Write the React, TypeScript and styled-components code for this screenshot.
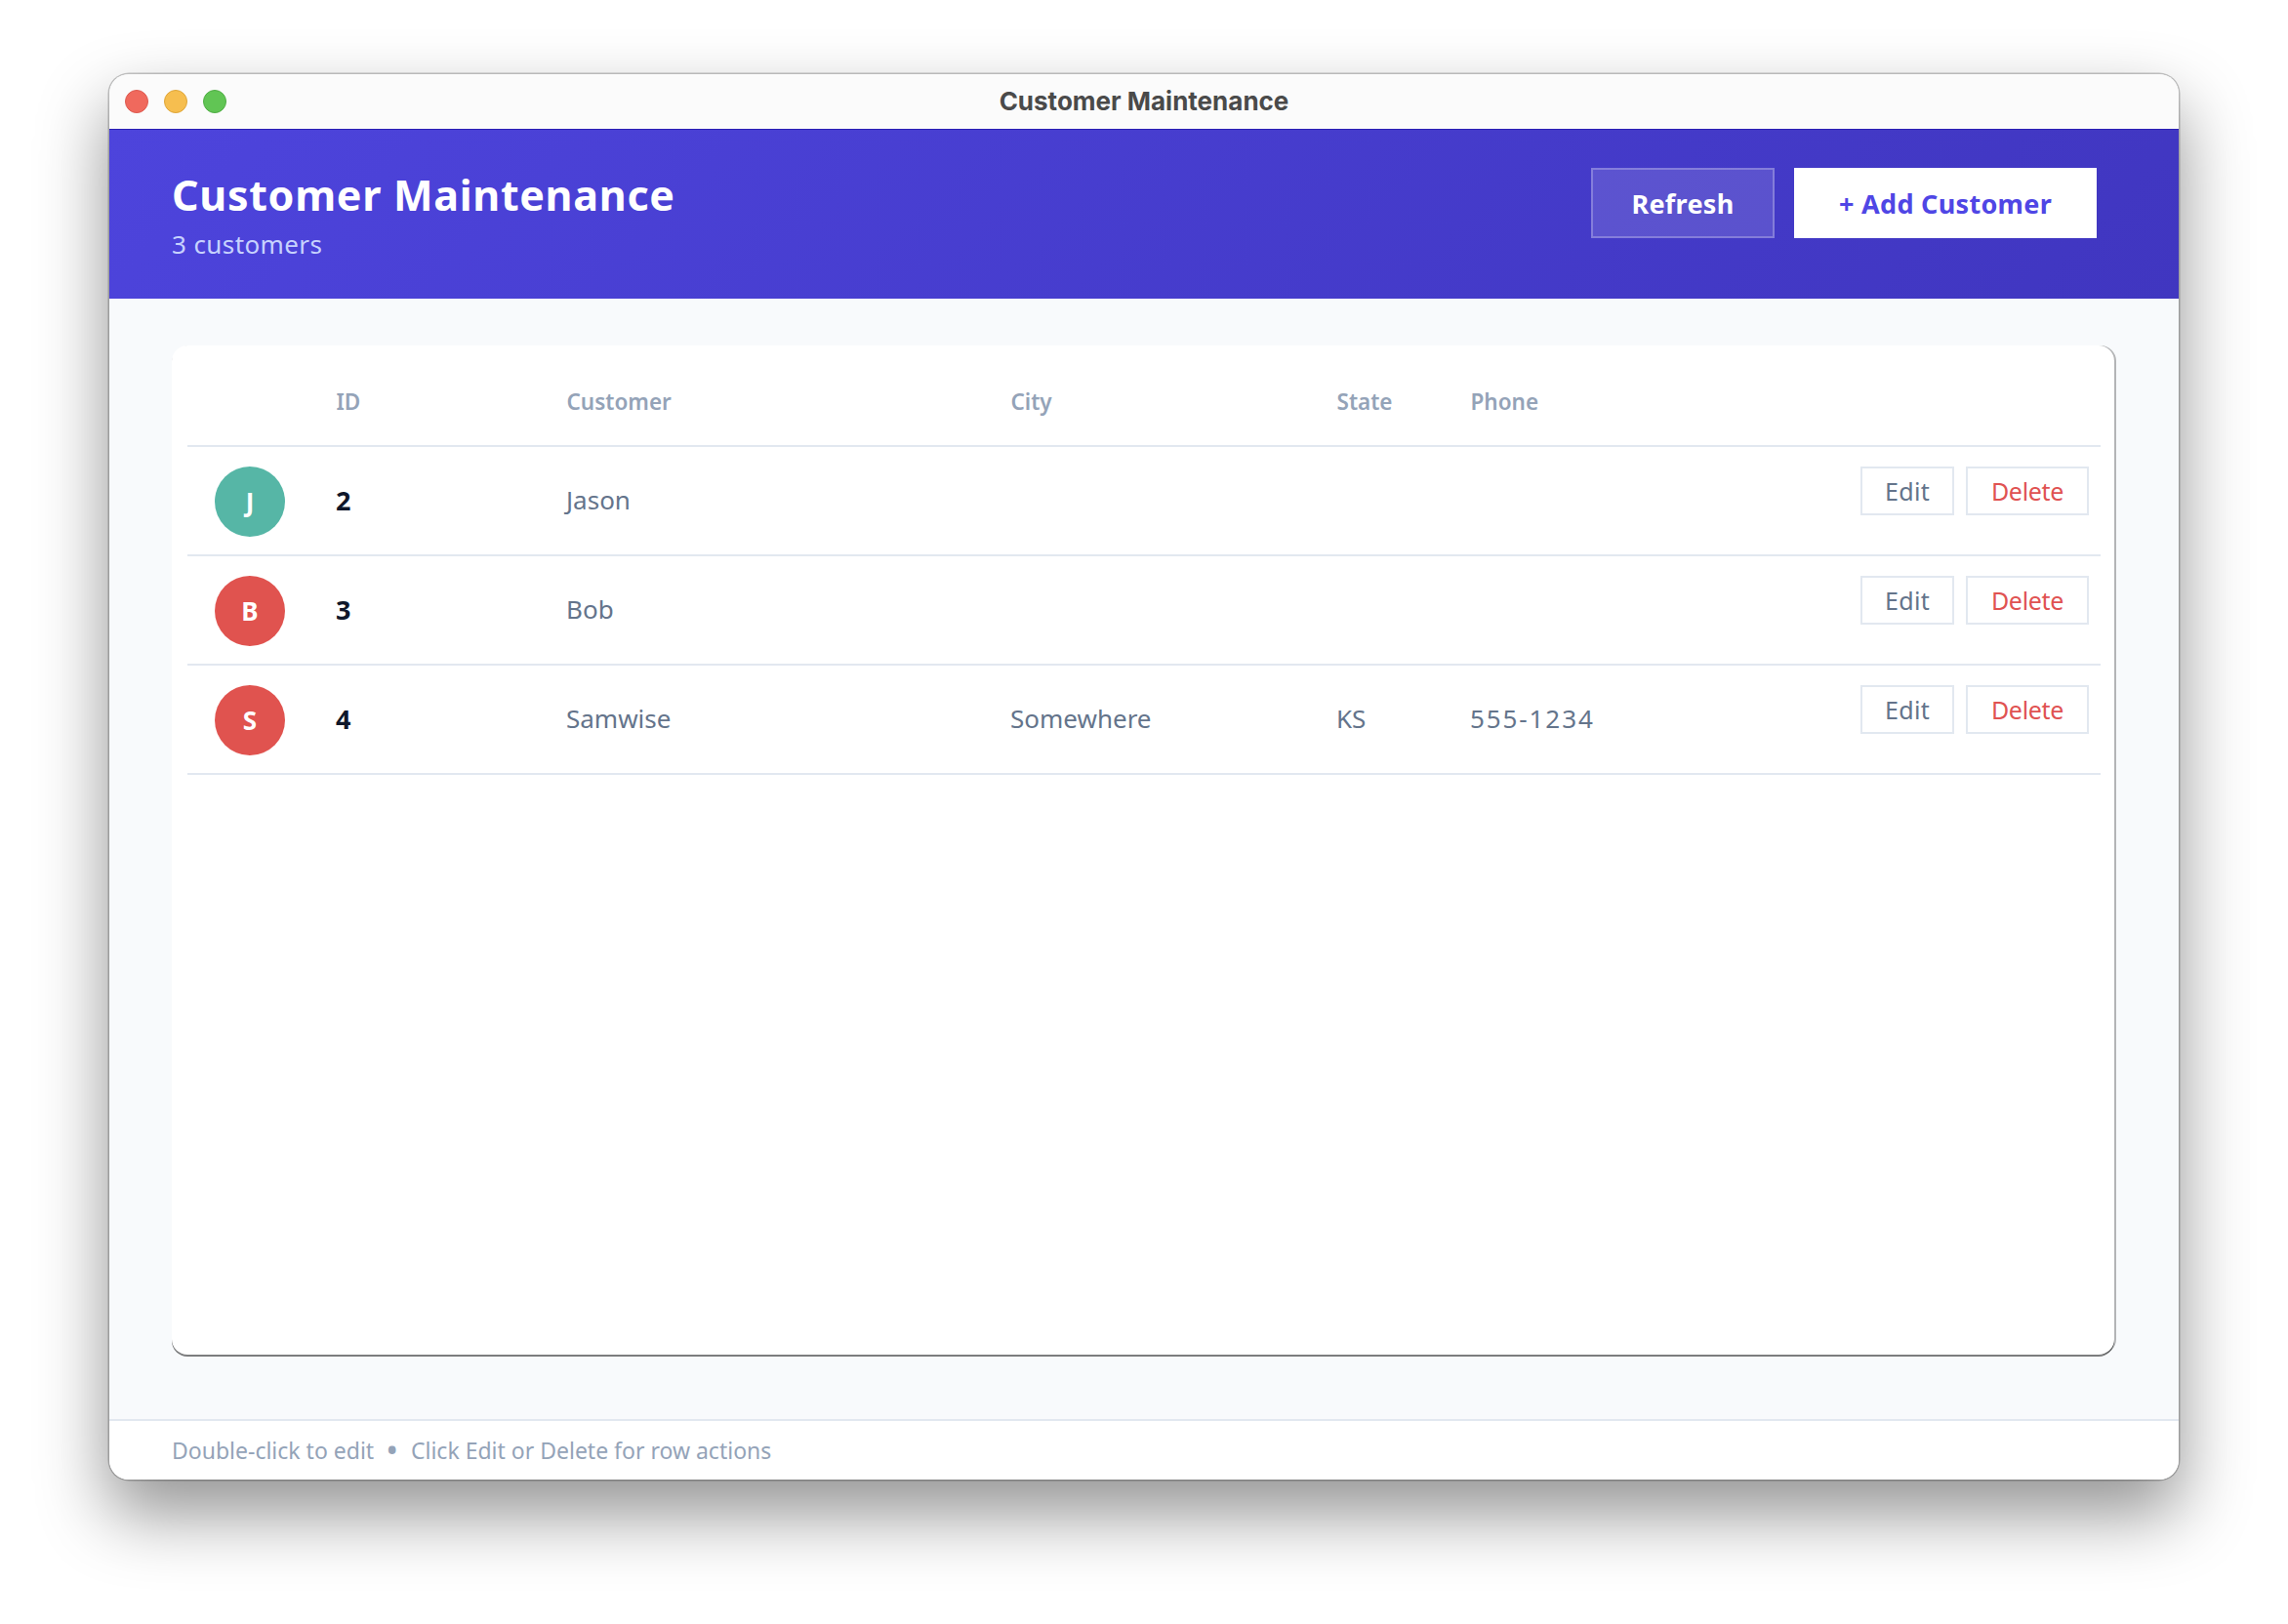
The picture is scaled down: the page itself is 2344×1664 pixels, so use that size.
import * as React from "react";
import styled, { createGlobalStyle } from "styled-components";

const FONT = `"Noto Sans", "Open Sans", "DejaVu Sans", sans-serif`;

const GlobalStyle = createGlobalStyle`
  html, body {
    margin: 0;
    padding: 0;
    background: #ffffff;
    font-family: ${FONT};
  }
  body {
    width: 2344px;
    height: 1664px;
    overflow: hidden;
  }
`;

const Page = styled.div`
  box-sizing: border-box;
  width: 2344px;
  height: 1664px;
  padding: 76px 112px 148px;
`;

const Window = styled.div`
  display: flex;
  flex-direction: column;
  width: 100%;
  height: 100%;
  border-radius: 20px;
  overflow: hidden;
  background: #f8fafc;
  box-shadow: 0 0 0 1.5px rgba(0, 0, 0, 0.22), 0 34px 70px 2px rgba(0, 0, 0, 0.42);
`;

const TitleBar = styled.div`
  position: relative;
  flex: none;
  box-sizing: border-box;
  display: flex;
  align-items: center;
  justify-content: center;
  height: 57px;
  padding-bottom: 2px;
  background: #fbfbfb;
  border-bottom: 1.5px solid #2a1eb4;
  font-family: Inter, "Liberation Sans", sans-serif;
  font-size: 26px;
  font-weight: 700;
  color: #4a4a4a;
`;

const Lights = styled.div`
  position: absolute;
  left: 16px;
  top: 16px;
  display: flex;
  gap: 16px;
`;

const Light = styled.span<{ $color: string; $edge: string }>`
  box-sizing: border-box;
  width: 24px;
  height: 24px;
  border-radius: 50%;
  background: ${(p) => p.$color};
  border: 1px solid ${(p) => p.$edge};
`;

const Header = styled.header`
  flex: none;
  box-sizing: border-box;
  display: flex;
  justify-content: space-between;
  align-items: flex-start;
  height: 173px;
  padding: 39px 84px 0 64px;
  background: linear-gradient(135deg, #4d44dc 0%, #4036c0 100%);
`;

const HeaderText = styled.div`
  display: flex;
  flex-direction: column;
  gap: 4px;
`;

const Title = styled.h1`
  margin: 0;
  font-size: 43px;
  line-height: 56px;
  font-weight: 700;
  letter-spacing: 0.7px;
  color: #ffffff;
`;

const Subtitle = styled.div`
  font-size: 26px;
  line-height: 36px;
  letter-spacing: 0.4px;
  color: #c7d2fe;
`;

const HeaderActions = styled.div`
  display: flex;
  gap: 20px;
`;

const HeaderButton = styled.button<{ $primary?: boolean }>`
  box-sizing: border-box;
  height: 72px;
  width: ${(p) => (p.$primary ? "310px" : "188px")};
  padding: 0;
  font-family: ${FONT};
  font-size: 27px;
  font-weight: 700;
  letter-spacing: 0.3px;
  color: ${(p) => (p.$primary ? "#4f46e5" : "#ffffff")};
  background: ${(p) => (p.$primary ? "#ffffff" : "rgba(255, 255, 255, 0.13)")};
  border: ${(p) => (p.$primary ? "none" : "2px solid rgba(255, 255, 255, 0.25)")};
  border-radius: 0;
`;

const Main = styled.main`
  flex: 1;
  min-height: 0;
  display: flex;
  padding: 48px 66px 66px 64px;
`;

const Card = styled.div`
  flex: 1;
  box-sizing: border-box;
  padding: 0 14px 0 16px;
  background: #ffffff;
  border-radius: 16px;
  box-shadow: 0 2px 0 rgba(0, 0, 0, 0.5), 2px 0 0 rgba(0, 0, 0, 0.28);
`;

const columns = "126px 236px 455px 334px 137px 1fr auto";

const HeadRow = styled.div`
  box-sizing: border-box;
  display: grid;
  grid-template-columns: ${columns};
  align-items: center;
  height: 104px;
  padding: 38px 0 26px;
  border-bottom: 2px solid #e2e8f0;
`;

const HeadCell = styled.div`
  padding-left: 26.5px;
  font-size: 22.5px;
  font-weight: 600;
  color: #94a3b8;
`;

const Row = styled.div`
  box-sizing: border-box;
  display: grid;
  grid-template-columns: ${columns};
  align-items: center;
  height: 112px;
  padding: 0 12px 2px 0;
  border-bottom: 2px solid #e2e8f0;
`;

const Avatar = styled.div<{ $color: string }>`
  display: flex;
  align-items: center;
  justify-content: center;
  align-self: start;
  width: 72px;
  height: 72px;
  margin: 20px 0 0 28px;
  border-radius: 50%;
  background: ${(p) => p.$color};
  font-size: 26px;
  font-weight: 700;
  color: #ffffff;
`;

const IdCell = styled.div`
  padding-left: 26px;
  font-size: 27px;
  font-weight: 700;
  color: #0f172a;
`;

const TextCell = styled.div<{ $spaced?: boolean }>`
  padding-left: 26px;
  font-size: 26px;
  letter-spacing: ${(p) => (p.$spaced ? "1.9px" : "0")};
  color: #64748b;
`;

const RowActions = styled.div`
  display: flex;
  gap: 12px;
  align-self: start;
  margin-top: 20px;
`;

const RowButton = styled.button<{ $danger?: boolean }>`
  box-sizing: border-box;
  width: ${(p) => (p.$danger ? "126px" : "96px")};
  height: 50px;
  padding: 0;
  font-family: ${FONT};
  font-size: 25px;
  letter-spacing: ${(p) => (p.$danger ? "-0.3px" : "0.3px")};
  color: ${(p) => (p.$danger ? "#e05252" : "#64748b")};
  background: #ffffff;
  border: 2px solid #e2e8f0;
  border-radius: 0;
`;

const Footer = styled.footer`
  flex: none;
  box-sizing: border-box;
  height: 62px;
  padding: 0 64px;
  background: #ffffff;
  border-top: 2px solid #e2e8f0;
  font-size: 23px;
  line-height: 60px;
  color: #94a3b8;
`;

const FooterDot = styled.span`
  margin: 0 13px 0 12px;
  font-size: 34px;
  line-height: 0;
  vertical-align: -3px;
`;

type Customer = {
  id: number;
  name: string;
  city: string;
  state: string;
  phone: string;
  color: string;
};

const customers: Customer[] = [
  { id: 2, name: "Jason", city: "", state: "", phone: "", color: "#56b6a6" },
  { id: 3, name: "Bob", city: "", state: "", phone: "", color: "#e0534f" },
  { id: 4, name: "Samwise", city: "Somewhere", state: "KS", phone: "555-1234", color: "#e0534f" },
];

const App = () => (
  <Page>
    <GlobalStyle />
    <Window>
      <TitleBar>
        <Lights>
          <Light $color="#f0695d" $edge="#dc5a50" />
          <Light $color="#f6be4f" $edge="#dea63a" />
          <Light $color="#61c554" $edge="#50ad45" />
        </Lights>
        Customer Maintenance
      </TitleBar>
      <Header>
        <HeaderText>
          <Title>Customer Maintenance</Title>
          <Subtitle>3 customers</Subtitle>
        </HeaderText>
        <HeaderActions>
          <HeaderButton>Refresh</HeaderButton>
          <HeaderButton $primary>+ Add Customer</HeaderButton>
        </HeaderActions>
      </Header>
      <Main>
        <Card>
          <HeadRow>
            <span />
            <HeadCell>ID</HeadCell>
            <HeadCell>Customer</HeadCell>
            <HeadCell>City</HeadCell>
            <HeadCell>State</HeadCell>
            <HeadCell>Phone</HeadCell>
            <span />
          </HeadRow>
          {customers.map((c) => (
            <Row key={c.id}>
              <Avatar $color={c.color}>{c.name[0]}</Avatar>
              <IdCell>{c.id}</IdCell>
              <TextCell>{c.name}</TextCell>
              <TextCell>{c.city}</TextCell>
              <TextCell>{c.state}</TextCell>
              <TextCell $spaced>{c.phone}</TextCell>
              <RowActions>
                <RowButton>Edit</RowButton>
                <RowButton $danger>Delete</RowButton>
              </RowActions>
            </Row>
          ))}
        </Card>
      </Main>
      <Footer>
        Double-click to edit<FooterDot>•</FooterDot>Click Edit or Delete for row actions
      </Footer>
    </Window>
  </Page>
);

export default App;
